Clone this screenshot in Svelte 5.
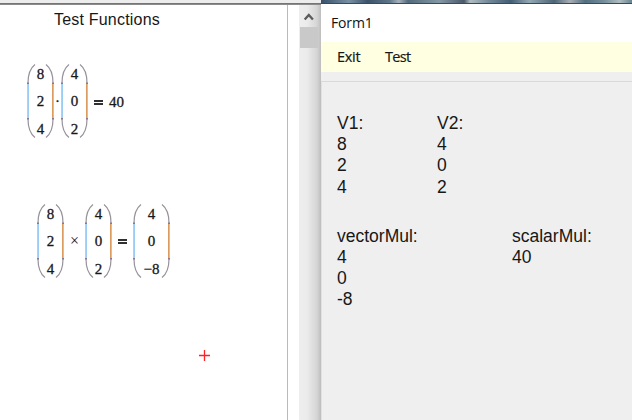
<script>
  const v1 = ['8', '2', '4'];
  const v2 = ['4', '0', '2'];
  const cross = ['4', '0', '−8'];
</script>

{#snippet matrix(values, width)}
  <span class="matrix" style:width="{width}px">
    <svg class="paren" width="9" height="74" viewBox="0 0 9 74">
      <path d="M8 .5C3.5 4 1 10 1 19M1 55C1 64 3.5 70 8 73.5" />
      <path class="warm" d="M.5 19V55" />
      <path class="cool" d="M1.5 19V55" />
      <path class="joint" d="M1 18.5V20M1 54V55.5" />
    </svg>
    <span class="entries">
      {#each values as value}<span>{value}</span>{/each}
    </span>
    <svg class="paren" width="9" height="74" viewBox="0 0 9 74">
      <path d="M1 .5C5.5 4 8 10 8 19M8 55C8 64 5.5 70 1 73.5" />
      <path class="warm strong" d="M7.5 19V55" />
      <path class="cool" d="M8.5 19V55" />
      <path class="joint" d="M8 18.5V20M8 54V55.5" />
    </svg>
  </span>
{/snippet}

<main>
  <section class="sheet">
    <div class="edge"></div>
    <div class="body">
      <div class="page">
        <h1>Test Functions</h1>
        <div class="equation dot">
          {@render matrix(v1, 27)}<span class="op mid">·</span>{@render matrix(v2, 27)}<span class="equals"></span><span class="result">40</span>
        </div>
        <div class="equation cross">
          {@render matrix(v1, 27)}<span class="op times">×</span>{@render matrix(v2, 27)}<span class="equals"></span>{@render matrix(cross, 37)}
        </div>
        <svg class="cursor" width="13" height="13" viewBox="0 0 13 13"><path d="M6.5 1V12M1 6.5H12" /></svg>
      </div>
      <div class="scroll">
        <svg width="19" height="22" viewBox="0 0 19 22"><path d="M5.7 14.6L9.8 10L13.9 14.6" /></svg>
        <div class="thumb"></div>
      </div>
    </div>
  </section>
  <section class="window">
    <div class="desktop"></div>
    <header>Form1</header>
    <nav><span class="exit">Exit</span><span>Test</span></nav>
    <div class="strip"></div>
    <div class="form">
      <div class="row first">
        <pre class="narrow">V1:
8
2
4</pre>
        <pre>V2:
4
0
2</pre>
      </div>
      <div class="row second">
        <pre class="wide">vectorMul:
4
0
-8</pre>
        <pre>scalarMul:
40</pre>
      </div>
    </div>
  </section>
</main>

<style>
  main {
    display: flex;
    width: 632px;
    height: 420px;
    overflow: hidden;
    background: #fff;
    color: #171717;
    font-family: "Liberation Sans", Arial, sans-serif;
  }
  .sheet { width: 321px; display: flex; flex-direction: column; }
  .edge {
    box-sizing: border-box;
    height: 5px;
    flex: none;
    background: #ececec;
    border-bottom: 1px solid #8c8c8c;
    box-shadow: inset 0 -1px #747474;
  }
  .body { display: flex; flex: 1; }
  .page {
    box-sizing: border-box;
    width: 288px;
    border-right: 1px solid #bababa;
  }
  h1 {
    margin: 5px 0 0 54px;
    font-size: 16px;
    line-height: 20px;
    font-weight: 400;
    letter-spacing: .2px;
  }
  .equation {
    display: flex;
    align-items: center;
    height: 74px;
    font-family: "Liberation Serif", "Times New Roman", serif;
    font-size: 15px;
    -webkit-text-stroke: .3px #171717;
  }
  .dot { margin: 34px 0 0 27px; }
  .cross { margin: 66px 0 0 37px; }
  .matrix { display: flex; flex: none; height: 74px; }
  .paren { flex: none; display: block; }
  .paren path { fill: none; stroke: #97929b; stroke-width: 1.2; }
  .paren .warm { stroke: #e5c3a4; stroke-width: 1; }
  .paren .strong { stroke: #dc9b5f; }
  .paren .cool { stroke: #9acdf5; stroke-width: 1; }
  .paren .joint { stroke: #8a7990; stroke-width: 2; }
  .entries {
    flex: 1;
    display: flex;
    flex-direction: column;
    align-items: center;
    min-width: 0;
    line-height: 27.3px;
    margin-top: -3px;
    white-space: nowrap;
  }
  .entries span { flex: none; height: 27.3px; }
  .op { text-align: center; -webkit-text-stroke: 0; }
  .mid { width: 7px; -webkit-text-stroke: .3px #171717; }
  .times { width: 21px; font-size: 16px; }
  .equals {
    box-sizing: border-box;
    width: 9px;
    height: 5px;
    margin: 1px 6px 0;
    border: solid #303030;
    border-width: 2px 0;
  }
  .dot .equals { margin-top: 2px; }
  .result { line-height: 20px; margin-top: 1px; }
  .cursor { display: block; margin: 71px 0 0 198px; }
  .cursor path { stroke: #f22; stroke-width: 1.3; }
  .scroll {
    width: 22px;
    margin-left: 11px;
    background: linear-gradient(90deg, #eeeeee 0, #ebebeb 8px, #d5d5d5 18px, #bdbdbd 22px);
  }
  .scroll svg { display: block; }
  .scroll path { fill: none; stroke: #5c5c5c; stroke-width: 2.3; }
  .thumb { width: 18px; height: 21px; margin-left: 1px; background: #c9c9c9; }
  .window {
    width: 311px;
    display: flex;
    flex-direction: column;
    background: #efefef;
  }
  .desktop {
    box-sizing: border-box;
    height: 4px;
    flex: none;
    border-bottom: 1px solid #3c4954;
    background: linear-gradient(90deg, #385069, #7890a2 9%, #3c536b 15%, #5d7689 22%, #a5b2bb 25%, #526a7c 28%, #8498a5 38%, #4b596a 46%, #b0bcc2 48%, #728998 54%, #435d72 61%, #93a8b3 67%, #4e6577 75%, #a7adb4 80%, #526e80 85%, #748e9b 91%, #b0bcc1 96%, #668491);
  }
  header {
    box-sizing: border-box;
    height: 38px;
    padding: 9px 0 0 10px;
    background: #fff;
    color: #111;
    font: 14px/20px "Open Sans", "Noto Sans", sans-serif;
    letter-spacing: -.15px;
  }
  nav {
    box-sizing: border-box;
    display: flex;
    height: 30px;
    padding: 5px 0 0 16px;
    background: #ffffe1;
    font: 14.5px/20px "Open Sans", "Noto Sans", sans-serif;
    letter-spacing: -.65px;
    -webkit-text-stroke: .2px #171717;
  }
  .exit { width: 48px; letter-spacing: -.3px; }
  .strip { height: 9px; border-bottom: 1px solid #dadada; }
  .form { flex: 1; border-left: 1px solid #e1e1e1; }
  .row { display: flex; padding-left: 15px; }
  .first { padding-top: 31px; }
  .second { padding-top: 28px; }
  pre {
    margin: 0;
    font: 17.5px/21.2px "Liberation Sans", Arial, sans-serif;
  }
  .narrow { width: 100px; }
  .wide { width: 175px; }
</style>
